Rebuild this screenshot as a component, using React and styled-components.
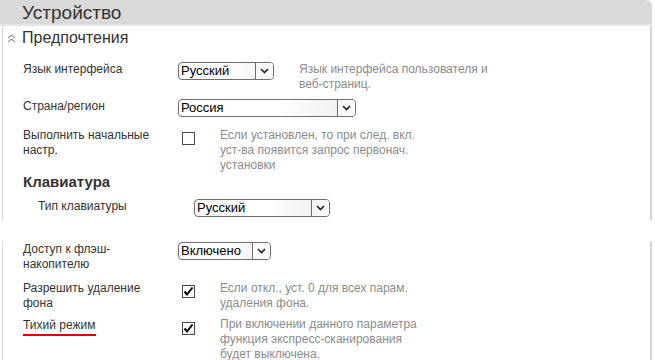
import React from "react";
import styled, { createGlobalStyle } from "styled-components";

const Global = createGlobalStyle`
  body {
    margin: 0;
    background: #fff;
    font-family: "Liberation Sans", Arial, sans-serif;
  }
`;

const Page = styled.div`
  width: 652px;
`;

const Header = styled.div`
  height: 24px;
  background: #d9d9d9;
  border-top-right-radius: 6px;
  border-bottom: 2px solid #e6e6e6;
  padding-left: 22px;
  font-size: 19px;
  line-height: 25px;
  color: #333;
`;

const Panel = styled.div`
  border-left: 1px solid #d6d6d6;
  border-right: 2px solid #d6d6d6;
  margin-left: 2px;
  padding-bottom: ${(p) => p.$pb || 0}px;
  margin-bottom: ${(p) => p.$mb || 0}px;
`;

const SectionTitle = styled.div`
  display: flex;
  align-items: center;
  height: 24px;
  font-size: 16px;
  color: #333;
  padding-left: 4px;
  gap: 6px;
`;

const Row = styled.div`
  display: flex;
  align-items: flex-start;
  padding-left: ${(p) => p.$indent || 20}px;
  margin-top: ${(p) => p.$mt || 0}px;
`;

const Label = styled.div`
  width: ${(p) => p.$w || 155}px;
  box-sizing: border-box;
  padding-right: 22px;
  flex: none;
  font-size: 12px;
  line-height: 15px;
  color: #333;
  padding-top: 1px;
`;

const Underlined = styled.span`
  display: inline-block;
  border-bottom: 2px solid #e00000;
  padding-bottom: 1px;
  padding-right: 1px;
`;

const Help = styled.div`
  width: 205px;
  margin-left: 25px;
  font-size: 12px;
  line-height: 15px;
  color: #8c8c8c;
  padding-top: ${(p) => (p.$tight ? 0 : 1)}px;
`;

const SelectBox = styled.div`
  width: ${(p) => p.$w}px;
  height: 18px;
  box-sizing: border-box;
  flex: none;
  display: flex;
  border: 1px solid #6e6e6e;
  border-radius: 4px;
  background: linear-gradient(to right, #ffffff 55%, #ececec);
  margin-top: 1px;
  overflow: hidden;
`;

const SelectText = styled.div`
  flex: 1;
  font-size: 13px;
  line-height: 16px;
  color: #000;
  padding-left: 2px;
`;

const SelectArrow = styled.div`
  width: 17px;
  border-left: 1px solid #6e6e6e;
  background: #fafafa;
  display: flex;
  align-items: center;
  justify-content: center;
`;

const CheckWrap = styled.div`
  width: 13px;
  height: 13px;
  box-sizing: border-box;
  border: 1px solid #4a4a4a;
  background: #fff;
  margin: 5px 0 0 4px;
  flex: none;
  display: flex;
  align-items: center;
  justify-content: center;
`;

const SubTitle = styled.div`
  font-size: 15px;
  font-weight: bold;
  color: #333;
  padding-left: 20px;
  line-height: 18px;
`;

const Select = ({ w, value }) => (
  <SelectBox $w={w}>
    <SelectText>{value}</SelectText>
    <SelectArrow>
      <svg width="9" height="6" viewBox="0 0 9 6">
        <path d="M1 1 L4.5 4.5 L8 1" fill="none" stroke="#222" strokeWidth="1.6" />
      </svg>
    </SelectArrow>
  </SelectBox>
);

const Check = ({ checked }) => (
  <CheckWrap>
    {checked && (
      <svg width="11" height="11" viewBox="0 0 11 11">
        <path d="M1.5 5.5 L4 8.5 L9.5 1.5" fill="none" stroke="#000" strokeWidth="2" />
      </svg>
    )}
  </CheckWrap>
);

const Collapse = () => (
  <svg width="9" height="9" viewBox="0 0 9 9">
    <path d="M1 4 L4.5 1 L8 4 M1 8 L4.5 5 L8 8" fill="none" stroke="#999" strokeWidth="1.3" />
  </svg>
);

export default function App() {
  return (
    <Page>
      <Global />
      <Header>Устройство</Header>
      <Panel $pb={3} $mb={21}>
        <SectionTitle>
          <Collapse />
          Предпочтения
        </SectionTitle>
        <Row $mt={11}>
          <Label>Язык интерфейса</Label>
          <Select w={96} value="Русский" />
          <Help>Язык интерфейса пользователя и веб-страниц.</Help>
        </Row>
        <Row $mt={6}>
          <Label>Страна/регион</Label>
          <Select w={178} value="Россия" />
        </Row>
        <Row $mt={10}>
          <Label>Выполнить начальные настр.</Label>
          <Check />
          <Help>Если установлен, то при след. вкл. уст-ва появится запрос первонач. установки</Help>
        </Row>
        <SubTitle>Клавиатура</SubTitle>
        <Row $indent={35} $mt={7}>
          <Label $w={156}>Тип клавиатуры</Label>
          <Select w={136} value="Русский" />
        </Row>
      </Panel>
      <Panel $pb={20}>
        <Row $mt={7}>
          <Label>Доступ к флэш-накопителю</Label>
          <Select w={93} value="Включено" />
        </Row>
        <Row $mt={8}>
          <Label>Разрешить удаление фона</Label>
          <Check checked />
          <Help>Если откл., уст. 0 для всех парам. удаления фона.</Help>
        </Row>
        <Row $mt={6}>
          <Label>
            <Underlined>Тихий режим</Underlined>
          </Label>
          <Check checked />
          <Help $tight>При включении данного параметра функция экспресс-сканирования будет выключена.</Help>
        </Row>
      </Panel>
    </Page>
  );
}
